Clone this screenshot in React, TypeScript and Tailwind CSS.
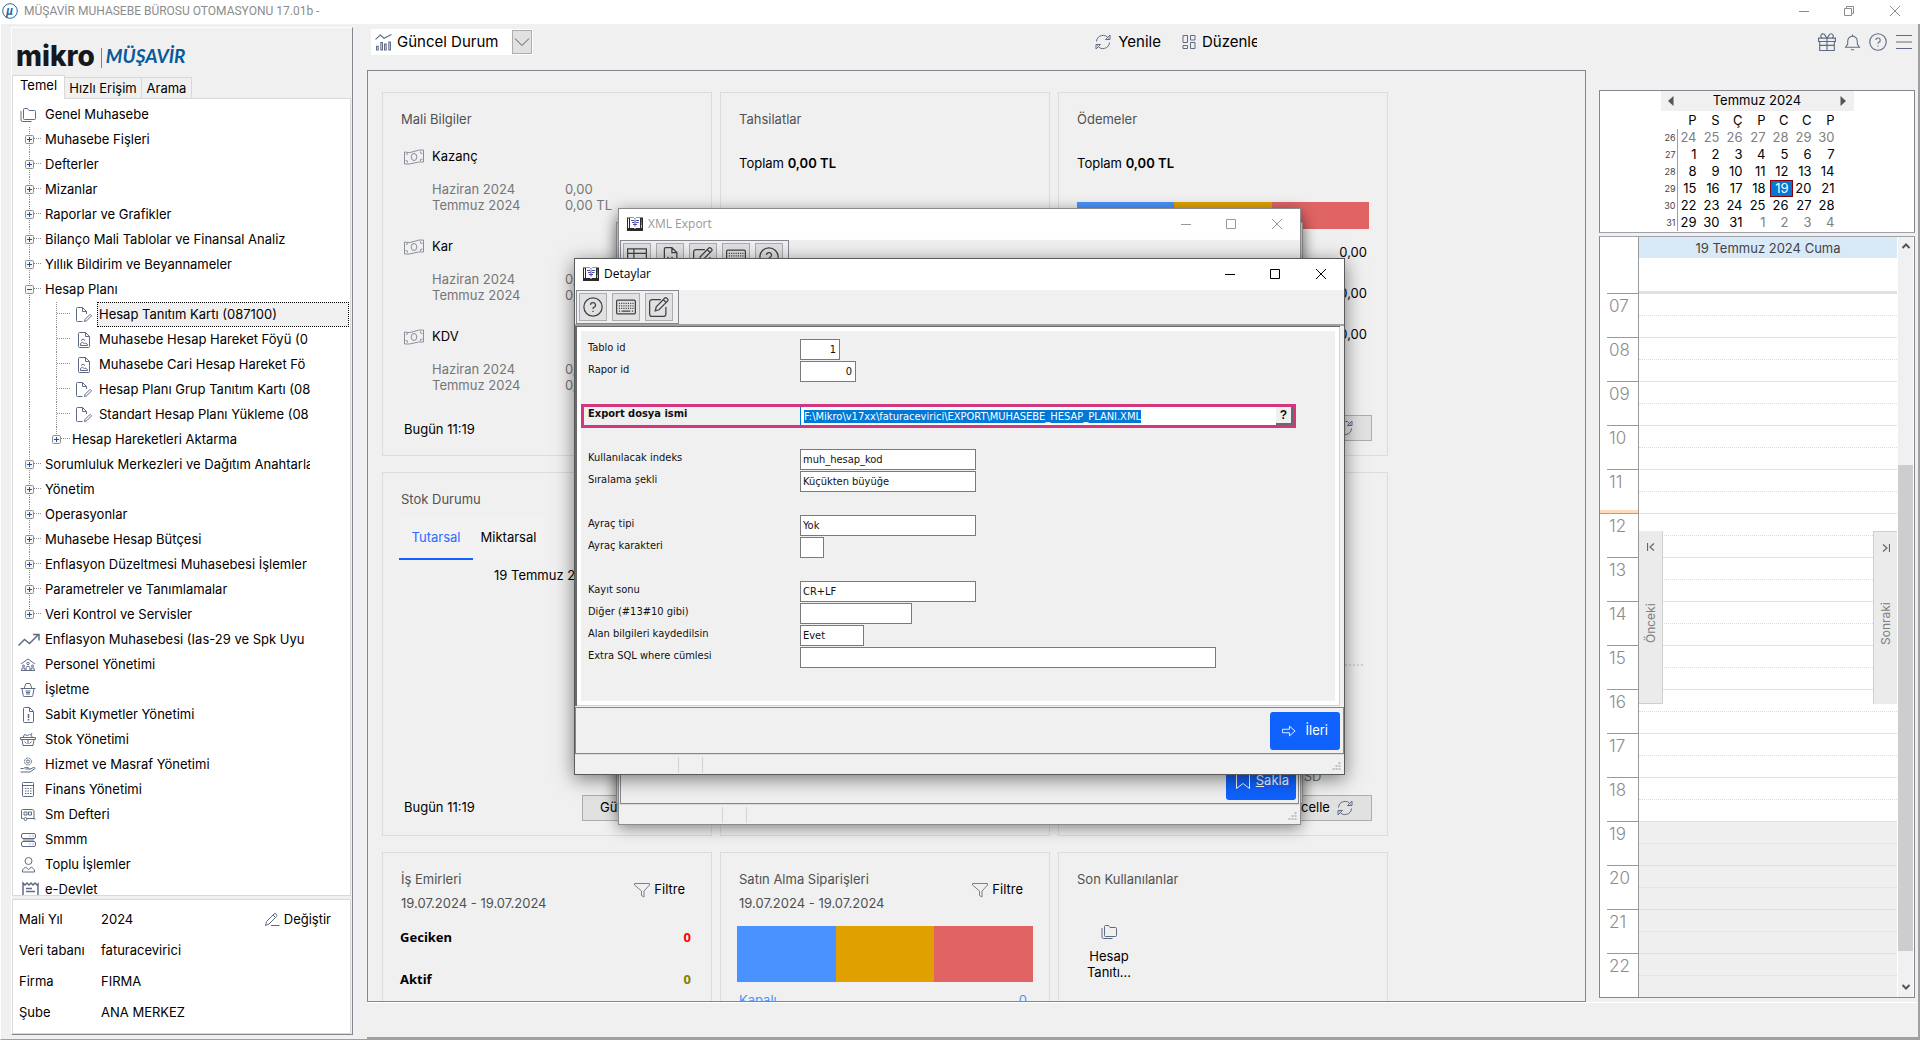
import { useEffect, useRef } from 'react'
import type { ReactNode } from 'react'
import clsx from 'clsx'

type IconProps = { className?: string; children?: ReactNode }

// All line icons share one 16px grid
function Icon({ className = 'size-4', children }: IconProps) {
  return (
    <svg
      viewBox="0 0 16 16"
      className={clsx('shrink-0', className.includes('text-') ? '' : 'text-[#5f6b85]', className)}
      fill="none"
      stroke="currentColor"
      strokeWidth="1"
      aria-hidden="true"
    >
      {children}
    </svg>
  )
}

const ICONS = {
  folders: (
    <>
      <path d="M3.5 11.500v-9a1 1 0 0 1 1-1h3l1.500 2h5.500a1 1 0 0 1 1 1v7a1 1 0 0 1-1 1h-10a1 1 0 0 1-1-1z" />
      <path d="M1 4v9a1.500 1.500 0 0 0 1.500 1.500h9" />
    </>
  ),
  fileEdit: (
    <>
      <path d="M6.500 14.500h-5a1 1 0 0 1-1-1v-12a1 1 0 0 1 1-1h5l4 4v2.500M6.500.5v4h4" />
      <path d="M8.500 14.500l.6-2.200 5-5 1.500 1.500-5 5z" />
    </>
  ),
  fileImage: (
    <>
      <path d="M2.500 1.500a1 1 0 0 1 1-1h6l4 4v10a1 1 0 0 1-1 1h-9a1 1 0 0 1-1-1zM9.500.5v4h4" />
      <path d="M4.500 13.500v-2l2-1.500 2 2 1-1 2 1.500v1z" />
      <path d="M5 8.500l2-1.500 2 1.500" />
    </>
  ),
  people: (
    <>
      <path d="M1 7l7-5 7 5" />
      <circle cx="8" cy="6.500" r="1.200" />
      <circle cx="3.500" cy="9" r="1" />
      <circle cx="12.500" cy="9" r="1" />
      <path d="M6 13.500v-3l2-1.500 2 1.500v3M1.500 13.500l.8-2.500h2.200l.8 2.500M10.700 13.500l.8-2.500h2.200l.8 2.500M1 13.500h14" />
    </>
  ),
  basket: (
    <>
      <path d="M.5 6.500h15M2 6.500l1.200 7a1 1 0 0 0 1 1h7.600a1 1 0 0 0 1-1l1.200-7M4 6.500l2-5M12 6.500l-2-5M6 1.500h4" />
      <path d="M5.500 9h5M6 10.500h4M6 12h4" />
    </>
  ),
  fileAlert: (
    <>
      <path d="M3.500 1.500a1 1 0 0 1 1-1h5l4 4v10a1 1 0 0 1-1 1h-8a1 1 0 0 1-1-1zM9.500.5v4h4" />
      <path d="M8.500 7v4M8.500 12v1.500" strokeWidth="1.500" />
    </>
  ),
  box: (
    <>
      <path d="M.5 5.500h15v2H.5zM2 7.500l1 6h10l1-6M3 5.500l1.500-3 3 1 2-1M12.500 5.500l-2-3M12 1l-1 2" />
      <path d="M4.500 9.500l2 2M8 8v4M11.500 9.500l-2 2" />
    </>
  ),
  handGear: (
    <>
      <circle cx="8" cy="4.500" r="3.500" strokeDasharray="2 .8" />
      <circle cx="8" cy="4.500" r="1.500" />
      <path d="M.5 11.500h3l1.500-.8h3.500l1 1.300h-4M9.500 12.500l4-2a1 1 0 0 1 1.500 1l-5 3.500h-9.500" />
    </>
  ),
  calculator: (
    <>
      <rect x="2.500" y=".5" width="11" height="14" rx="1" />
      <path d="M2.500 3.500h11M5 6.500h1.500M7.500 6.500H9M10 6.500h1.500M5 9h1.500M7.500 9H9M10 9h1.500M5 11.500h1.500M7.500 11.500H9M10 11.500h1.500" />
    </>
  ),
  ledger: (
    <>
      <path d="M1.500 10.500v-7a1 1 0 0 1 1-1h10l1.500 1v8.500h1.500M1.500 9v2.500h2M7 11.500h7" />
      <path d="M4 5h3v3H4zM8.500 5h3v3h-3z" />
      <circle cx="5.500" cy="12" r="1.500" />
    </>
  ),
  server: (
    <>
      <rect x="1.500" y="1.500" width="14" height="5" rx="1.500" />
      <rect x="1.500" y="9.500" width="14" height="5" rx="1.500" />
      <path d="M9.500 4h1M12.500 4h1M9.500 12h1M12.500 12h1M3 8h11" />
    </>
  ),
  user: (
    <>
      <circle cx="8.500" cy="4" r="3.500" />
      <path d="M2.500 15v-2l3-3 3 2.500 3-2.500 3 3v2z" />
    </>
  ),
  pencilLine: (
    <>
      <path d="M1.500 13.500l1-4 7.500-7.500a1.500 1.500 0 0 1 2 0l.5.500a1.500 1.500 0 0 1 0 2L5 12z" />
      <path d="M9 3l2.500 2.500M7 13.500h8.500" />
    </>
  ),
  renew: (
    <>
      <path d="M1.500 7.500a6.500 6.500 0 0 1 12-3M14.500 8.500a6.500 6.500 0 0 1-12 3" />
      <path d="M15 1v4.500h-4.500zM1 15v-4.500h4.500z" />
    </>
  ),
  layout: (
    <path d="M2 1.500h4.500v7H2zM9.500 1.500H14V6H9.500zM2 11.500h4.500v3H2zM9.500 8.500H14v6H9.500z" />
  ),
  filter: <path d="M.5 1.500h15v1.500l-5.500 6v6l-2.500-1.500V9L.5 3z" />,
  gift: (
    <>
      <path d="M.5 4.500h15v3H.5zM1.500 7.500h13v8h-13zM8 4.500v11M1.500 11h13" />
      <path d="M8 4.500L5.500 1a1.800 1.800 0 0 0-2 3.500M8 4.500L10.500 1a1.800 1.800 0 0 1 2 3.500" />
    </>
  ),
  bell: (
    <path d="M1.500 12.500l2-3v-3a4.500 4.500 0 0 1 9 0v3l2 3zM8 2V.5M6.500 14.800h3" />
  ),
  help: (
    <>
      <circle cx="8" cy="8" r="7.300" />
      <path d="M6 6.300a2 2 0 1 1 2.700 2q-.7.3-.7 1.200M8 11v1" />
    </>
  ),
  menu: <path d="M0 1.500h16M0 8h16M0 14.500h16" />,
  chart: (
    <>
      <path d="M.5 5l4.500-4 3.500 3L15.500.5" />
      <path d="M1.500 11.500h1.500v3.500H1.500zM5.500 8h1.500v7H5.500zM9 9.500h1.500v5.500H9zM13 7.500h1.500v7.500H13z" />
    </>
  ),
  keyboard: (
    <>
      <rect x=".5" y="2.500" width="15" height="11" rx="1" />
      <path d="M2.300 5h12M2.300 7h12M2.300 9h12" strokeDasharray=".9 .9" />
      <path d="M2.300 11.300h1M4.500 11.300h7M12.700 11.300h1" />
    </>
  ),
  compose: (
    <>
      <path d="M9.500 2h-7a2 2 0 0 0-2 2v9.500a2 2 0 0 0 2 2h9a2 2 0 0 0 2-2V8" />
      <path d="M5 11l.8-3.200 6.700-6.800a1.300 1.300 0 0 1 1.800 0l.5.500a1.300 1.300 0 0 1 0 1.800L8 10.200zM11.500 2.200l2.200 2.200" />
    </>
  ),
  grid: <path d="M.5 1.500h15v13H.5zM.5 5h15M5.500 1.500v13M.5 9.500h15" />,
  fileX: (
    <>
      <path d="M3.500 14.500v-13a1 1 0 0 1 1-1h5l4 4v10M9.500.5v4h4" />
      <path d="M6 8l4 5M10 8l-4 5" />
    </>
  ),
  arrow: <path d="M.5 6h8V2.500L15 8l-6.500 5.500V10h-8z" />,
  bookmark: <path d="M1.500.5h13v15L8 10.500l-6.500 5z" />,
}

type IconName = keyof typeof ICONS

function Money() {
  return (
    <svg viewBox="0 0 20 16" className="w-5 h-4 text-[#8a8f9c]" fill="none" stroke="currentColor" aria-hidden="true">
      <path d="M.5 3q5 1.500 9.500-.5t9.500-1.500v12q-5-.5-9.500 1t-9.500 1z" />
      <path d="M3.500 4.200v.8l-1.500.5M16.500 2.500v1.500l2 .5M3.500 13.500V12L1.500 11.500M16.500 12V10.500l2-.5" />
      <ellipse cx="10" cy="8" rx="2.800" ry="3.500" />
    </svg>
  )
}

// Open book used as window icon
function BookIcon() {
  return (
    <svg viewBox="0 0 16 14" className="w-4 h-[14px] shrink-0" aria-hidden="true">
      <path d="M0 .5h6.500L8 1.500 9.500.5H16V14H0z" fill="#2a2a2a" />
      <path d="M1 1.500h1V11H1zM3 1h4l1 1 1-1h4v10H9l-1 1-1-1H3z" fill="#fff" />
      <path d="M4 3.500h3M9 3.500h3M5 5.500h2.500M9 5.500h2.500M6 7.500h4M8 2.500v7" stroke="#4a4ab0" fill="none" />
      <path d="M14.500 2v3" stroke="#d22" />
      <path d="M14.500 5v3" stroke="#0a8" />
      <path d="M14.500 8v3" stroke="#ec0" />
    </svg>
  )
}

type TreeItem = {
  label: string
  guide?: 'plus' | 'minus' | 'leaf' | 'subplus'
  icon?: IconName | 'trend' | 'receipt'
  selected?: boolean
  edge?: 'last'
}

const TREE: TreeItem[] = [
  { label: 'Genel Muhasebe', icon: 'folders' },
  { label: 'Muhasebe Fişleri', guide: 'plus' },
  { label: 'Defterler', guide: 'plus' },
  { label: 'Mizanlar', guide: 'plus' },
  { label: 'Raporlar ve Grafikler', guide: 'plus' },
  { label: 'Bilanço Mali Tablolar ve Finansal Analiz', guide: 'plus' },
  { label: 'Yıllık Bildirim ve Beyannameler', guide: 'plus' },
  { label: 'Hesap Planı', guide: 'minus' },
  { label: 'Hesap Tanıtım Kartı (087100)', guide: 'leaf', icon: 'fileEdit', selected: true },
  { label: 'Muhasebe Hesap Hareket Föyü (0', guide: 'leaf', icon: 'fileImage' },
  { label: 'Muhasebe Cari Hesap Hareket Fö', guide: 'leaf', icon: 'fileImage' },
  { label: 'Hesap Planı Grup Tanıtım Kartı (08', guide: 'leaf', icon: 'fileEdit' },
  { label: 'Standart Hesap Planı Yükleme (08', guide: 'leaf', icon: 'fileEdit' },
  { label: 'Hesap Hareketleri Aktarma', guide: 'subplus' },
  { label: 'Sorumluluk Merkezleri ve Dağıtım Anahtarla', guide: 'plus' },
  { label: 'Yönetim', guide: 'plus' },
  { label: 'Operasyonlar', guide: 'plus' },
  { label: 'Muhasebe Hesap Bütçesi', guide: 'plus' },
  { label: 'Enflasyon Düzeltmesi Muhasebesi İşlemler', guide: 'plus' },
  { label: 'Parametreler ve Tanımlamalar', guide: 'plus' },
  { label: 'Veri Kontrol ve Servisler', guide: 'plus', edge: 'last' },
  { label: 'Enflasyon Muhasebesi (Ias-29 ve Spk Uyu', icon: 'trend' },
  { label: 'Personel Yönetimi', icon: 'people' },
  { label: 'İşletme', icon: 'basket' },
  { label: 'Sabit Kıymetler Yönetimi', icon: 'fileAlert' },
  { label: 'Stok Yönetimi', icon: 'box' },
  { label: 'Hizmet ve Masraf Yönetimi', icon: 'handGear' },
  { label: 'Finans Yönetimi', icon: 'calculator' },
  { label: 'Sm Defteri', icon: 'ledger' },
  { label: 'Smmm', icon: 'server' },
  { label: 'Toplu İşlemler', icon: 'user' },
  { label: 'e-Devlet', icon: 'receipt' },
]

function ExpandBox({ x, minus }: { x: number; minus?: boolean }) {
  return (
    <>
      <rect x={x - 3.5} y="8.500" width="8" height="8" rx="1" fill="#f6f6f6" stroke="#8f8f8f" />
      <path d={`M${x - 2} 12.500h5`} stroke="#2a4a9c" />
      {!minus && <path d={`M${x + 0.5} 10v5`} stroke="#2a4a9c" />}
    </>
  )
}

const GUIDE_WIDTH = { plus: 30, minus: 30, leaf: 59, subplus: 57 }

function TreeGuide({ item }: { item: TreeItem }) {
  const deep = item.guide === 'leaf' || item.guide === 'subplus'
  return (
    <svg width={GUIDE_WIDTH[item.guide ?? 'plus']} height="25" className="shrink-0" fill="none" aria-hidden="true">
      <path d={item.edge === 'last' ? 'M16.500 0v12' : 'M16.500 0v25'} stroke="#8c8c8c" strokeDasharray="1 1" />
      {deep && <path d={item.guide === 'subplus' ? 'M43.500 0v12' : 'M43.500 0v25'} stroke="#8c8c8c" strokeDasharray="1 1" />}
      <path d={deep ? 'M44 11.500h13' : 'M17 11.500h12'} stroke="#8c8c8c" strokeDasharray="1 1" />
      {!deep && <ExpandBox x={16} minus={item.guide === 'minus'} />}
      {item.guide === 'subplus' && <ExpandBox x={43} />}
    </svg>
  )
}

function TreeRow({ item }: { item: TreeItem }) {
  return (
    <li className="flex h-[25px] items-center">
      {item.guide && <TreeGuide item={item} />}
      {!item.guide && (
        <span className="flex w-[30px] shrink-0 items-center pl-[7px]">
          {item.icon === 'trend' && (
            <svg viewBox="0 0 22 14" className="-ml-[2px] h-[14px] w-[22px] shrink-0 text-[#5f6b85]" fill="none" stroke="currentColor" strokeWidth="1.500">
              <path d="M.5 12.500l6-6 5 4 9-9M15 1.500h6v6" />
            </svg>
          )}
          {item.icon === 'receipt' && (
            <svg viewBox="0 0 20 18" className="-ml-px h-[18px] w-5 shrink-0 text-[#5f6b85]" fill="none" stroke="currentColor" strokeWidth="1.500">
              <path d="M4 15V2l2 2 2-2 2 2 2-2 2 2 2-2 2 2 1-1v13M0 15.500h15M7 7.500h6M7 10.500h9M1 15v2" />
            </svg>
          )}
          {item.icon && item.icon !== 'trend' && item.icon !== 'receipt' && <Icon>{ICONS[item.icon]}</Icon>}
        </span>
      )}
      {item.guide === 'leaf' && item.icon && (
        <span className="w-[25px] shrink-0 pl-1">
          <Icon>{ICONS[item.icon as IconName]}</Icon>
        </span>
      )}
      <button
        type="button"
        className={clsx(
          'h-[25px] min-w-0 flex-1 overflow-hidden whitespace-nowrap border border-dotted px-px text-left',
          item.selected ? 'mr-px border-black bg-[#f0f0f0]' : 'mr-[39px] border-transparent'
        )}
      >
        {item.label}
      </button>
    </li>
  )
}

const COMPANY_INFO = [
  ['Mali Yıl', '2024'],
  ['Veri tabanı', 'faturacevirici'],
  ['Firma', 'FIRMA'],
  ['Şube', 'ANA MERKEZ'],
]

function Sidebar() {
  return (
    <aside className="flex w-[367px] shrink-0 flex-col border-b border-l border-l-white border-b-[#a0a0a0] pb-1 pl-[10px] pr-[14px] pt-[3px]">
      <div className="flex min-h-0 flex-1 flex-col border border-b-[#828790] border-l-white border-r-[#828790] border-t-white pr-px">
        <div className="flex h-[47px] shrink-0 items-end pb-[7px] pl-1">
          <span className="font-['Inter'] text-[28px] font-extrabold leading-6 text-[#16181d]">mikro</span>
          <span className="ml-[6px] h-5 w-px bg-[#5b8db8]" />
          <span className="ml-1 font-['Lato'] text-[19px] font-bold italic leading-6 text-[#07599c]">MÜŞAVİR</span>
        </div>
        <div className="flex shrink-0 items-end">
          <button type="button" className="z-10 -mb-px h-6 w-[53px] border border-b-0 border-[#d9d9d9] bg-white pb-[3px]">Temel</button>
          <button type="button" className="h-[21px] w-[77px] border border-b-0 border-l-0 border-[#d9d9d9] pt-px">Hızlı Erişim</button>
          <button type="button" className="h-[21px] w-[50px] border border-b-0 border-l-0 border-[#d9d9d9] pt-px">Arama</button>
        </div>
        <ul className="min-h-0 flex-1 overflow-hidden border border-[#d9d9d9] bg-white pt-[3px]">
          {TREE.map((item) => (
            <TreeRow key={item.label} item={item} />
          ))}
        </ul>
        <div className="mt-[3px] flex h-[135px] shrink-0 items-start border border-[#d9d9d9] bg-white pl-[6px] pr-[19px] pt-1">
          <dl className="flex-1">
            {COMPANY_INFO.map(([term, value]) => (
              <div key={term} className="flex h-[31px] items-center">
                <dt className="w-[82px]">{term}</dt>
                <dd>{value}</dd>
              </div>
            ))}
          </dl>
          <button type="button" className="flex h-[31px] items-center gap-1">
            <Icon>{ICONS.pencilLine}</Icon>
            Değiştir
          </button>
        </div>
      </div>
    </aside>
  )
}

function Card({ title, children }: { title?: string; children?: ReactNode }) {
  return (
    <section className="flex h-[364px] flex-col border border-[#dcdcdc] px-[18px] pt-4">
      {title && <h2 className="leading-5 text-[#505050]">{title}</h2>}
      {children}
    </section>
  )
}

function CardFooter() {
  return (
    <div className="mb-[14px] mt-auto flex items-center justify-between pl-[3px] -mr-[3px]">
      <span>Bugün 11:19</span>
      <button type="button" className="flex h-[26px] w-[114px] items-center justify-between border border-[#adadad] bg-[#e1e1e1] pl-[17px] pr-[18px]">
        Güncelle
        <Icon>{ICONS.renew}</Icon>
      </button>
    </div>
  )
}

function StatusBars({ className }: { className: string }) {
  return (
    <div className={clsx('grid grid-cols-3', className)}>
      <div className="bg-[#4a92ff]" />
      <div className="bg-[#e0a100]" />
      <div className="bg-[#e06464]" />
    </div>
  )
}

const FINANCE = ['Kazanç', 'Kar', 'KDV']

function FinanceCard() {
  return (
    <Card title="Mali Bilgiler">
      <div className="pl-[3px] pt-[18px]">
        {FINANCE.map((name) => (
          <div key={name} className="h-[90px]">
            <div className="flex h-5 items-center gap-2">
              <Money />
              <span>{name}</span>
            </div>
            <div className="mt-[14px] grid grid-cols-[133px_1fr] pl-7 leading-4 text-[#767676]">
              <span>Haziran 2024</span>
              <span>0,00</span>
              <span>Temmuz 2024</span>
              <span>0,00 TL</span>
            </div>
          </div>
        ))}
      </div>
      <CardFooter />
    </Card>
  )
}

function StockCard() {
  return (
    <Card title="Stok Durumu">
      <div className="-ml-[2px] mt-[7px] flex h-11 w-[145px] bg-[#f2f2f2]">
        <button type="button" className="w-[74px] border-b-2 border-[#0f62fe] pt-[2px] text-[#2f6bff]">Tutarsal</button>
        <button type="button" className="flex-1">Miktarsal</button>
      </div>
      <p className="mt-[5px] pl-[93px] leading-5">19 Temmuz 2024</p>
      <CardFooter />
    </Card>
  )
}

function FilteredTitle({ title }: { title: string }) {
  return (
    <div className="flex justify-between pr-2">
      <div className="leading-6 text-[#505050]">
        <h2 className="-mt-[2px]">{title}</h2>
        <p>19.07.2024 - 19.07.2024</p>
      </div>
      <button type="button" className="mt-[11px] flex h-5 items-center gap-1 self-start">
        <Icon className="size-4 text-[#7a7f8a]">{ICONS.filter}</Icon>
        Filtre
      </button>
    </div>
  )
}

function Dashboard() {
  return (
    <main className="min-h-0 min-w-0 flex-1 overflow-hidden border border-[#828790] px-[14px] pt-[21px]">
      <div className="grid grid-cols-[330px_330px_330px] gap-x-2 gap-y-4">
        <FinanceCard />
        <Card title="Tahsilatlar">
          <p className="mt-6 leading-5">
            Toplam <b className="font-semibold">0,00 TL</b>
          </p>
          <CardFooter />
        </Card>
        <Card title="Ödemeler">
          <p className="mt-6 leading-5">
            Toplam <b className="font-semibold">0,00 TL</b>
          </p>
          <StatusBars className="mt-[29px] h-[27px]" />
          <ul className="mt-3 pr-[2px] text-right">
            {['Kapalı', 'Açık', 'Geciken'].map((key) => (
              <li key={key} className="h-[41px] leading-[22px]">0,00</li>
            ))}
          </ul>
          <CardFooter />
        </Card>

        <StockCard />
        <Card title="Kasa Durumu">
          <CardFooter />
        </Card>
        <Card title="Döviz Kurları">
          <div className="mt-[155px] border-b-2 border-dotted border-[#d4d4d4] mr-[6px]" />
          <p className="mt-[100px] pl-[217px] leading-5 text-[#767676]">USD</p>
          <CardFooter />
        </Card>

        <Card>
          <FilteredTitle title="İş Emirleri" />
          <dl className="-ml-px mt-3 pr-[2px] font-['Noto_Sans'] font-bold">
            <div className="flex h-[42px] justify-between leading-5">
              <dt>Geciken</dt>
              <dd className="text-[#ff0000]">0</dd>
            </div>
            <div className="flex h-[42px] justify-between leading-5">
              <dt>Aktif</dt>
              <dd className="text-[#808000]">0</dd>
            </div>
          </dl>
        </Card>
        <Card>
          <FilteredTitle title="Satın Alma Siparişleri" />
          <StatusBars className="-mx-[2px] mt-[11px] h-14 shrink-0" />
          <div className="mt-2 flex justify-between pr-1 leading-5 text-[#4a92ff]">
            <span>Kapalı</span>
            <span>0</span>
          </div>
        </Card>
        <Card title="Son Kullanılanlar">
          <button type="button" className="mt-[35px] flex w-16 flex-col items-center gap-2 leading-4">
            <Icon>{ICONS.folders}</Icon>
            Hesap Tanıtı...
          </button>
        </Card>
      </div>
    </main>
  )
}

const WEEKDAYS = ['P', 'S', 'Ç', 'P', 'C', 'C', 'P']
const WEEKS = [
  { no: 26, days: [24, 25, 26, 27, 28, 29, 30] },
  { no: 27, days: [1, 2, 3, 4, 5, 6, 7] },
  { no: 28, days: [8, 9, 10, 11, 12, 13, 14] },
  { no: 29, days: [15, 16, 17, 18, 19, 20, 21] },
  { no: 30, days: [22, 23, 24, 25, 26, 27, 28] },
  { no: 31, days: [29, 30, 31, 1, 2, 3, 4] },
]

function isOtherMonth(no: number, day: number) {
  return (no === 26 && day > 20) || (no === 31 && day < 10)
}

function Calendar() {
  return (
    <div className="flex h-[143px] shrink-0 flex-col items-center border border-[#828790] border-b-[#a0a0a8] bg-white">
      <div className="flex h-5 w-[193px] items-center justify-between bg-[#f0f0f0] px-[7px]">
        <button type="button" aria-label="Önceki ay">
          <svg viewBox="0 0 6 10" className="h-[10px] w-[6px]"><path d="M5.500 0v10L0 5z" fill="#555" /></svg>
        </button>
        <span>Temmuz 2024</span>
        <button type="button" aria-label="Sonraki ay">
          <svg viewBox="0 0 6 10" className="h-[10px] w-[6px]"><path d="M.5 0v10L6 5z" fill="#555" /></svg>
        </button>
      </div>
      <table className="mr-[15px] table-fixed border-separate border-spacing-0 text-right">
        <thead>
          <tr className="h-[18px] leading-[17px]">
            <th className="w-[17px]" />
            {WEEKDAYS.map((d, i) => (
              <th key={i} className="w-[23px] p-0 pr-1 font-normal">{d}</th>
            ))}
          </tr>
        </thead>
        <tbody>
          {WEEKS.map((week) => (
            <tr key={week.no} className="h-[17px]">
              <td className="border-r border-[#a0a0a0] p-0 pr-px text-[9px] leading-[17px] text-[#444]">{week.no}</td>
              {week.days.map((day) => (
                <td
                  key={day}
                  className={clsx(
                    'h-[17px] p-0 leading-[15px]',
                    week.no === 29 && day === 19 ? 'border border-[#8b0000] bg-[#0078d7] pr-[3px] text-white' : 'pr-1',
                    isOtherMonth(week.no, day) && 'text-[#808080]'
                  )}
                >
                  {day}
                </td>
              ))}
            </tr>
          ))}
        </tbody>
      </table>
    </div>
  )
}

const HOURS = ['07', '08', '09', '10', '11', '12', '13', '14', '15', '16', '17', '18', '19', '20', '21', '22']

function DayNav({ side, label }: { side: 'left' | 'right'; label: string }) {
  return (
    <button
      type="button"
      className={clsx(
        'absolute top-[294px] flex h-[173px] w-6 flex-col items-center bg-[#ebebeb] pt-3 text-xs text-[#808080]',
        side === 'left' ? 'left-[39px] border-b border-r border-[#cfcfcf]' : 'right-[17px] border-l border-t border-[#cfcfcf]'
      )}
    >
      <svg viewBox="0 0 8 8" className="h-2 w-2 shrink-0" fill="none" stroke="#666">
        <path d={side === 'left' ? 'M.5 0v8M7 .5L3 4l4 3.500' : 'M7.500 0v8M1 .5L5 4 1 7.500'} strokeWidth="1.200" />
      </svg>
      <span className="flex flex-1 rotate-180 items-center justify-center pt-2 [writing-mode:vertical-rl]">{label}</span>
    </button>
  )
}

function Scheduler() {
  return (
    <div className="relative mt-[3px] flex min-h-0 flex-1 overflow-hidden border border-[#828790] border-t-[#a0a0a8] bg-white">
      <div className="min-w-0 flex-1">
        <div className="flex h-14">
          <div className="w-[39px] border-r border-[#999]" />
          <div className="flex-1 border-b-2 border-[#e0e0e0]">
            <div className="bg-[#d8e9f8] pt-px text-center leading-5 text-[#444]">19 Temmuz 2024 Cuma</div>
          </div>
        </div>
        {HOURS.map((hour) => (
          <div key={hour} className="flex h-11">
            <div className="relative w-[39px] border-r border-[#999] pl-[7px]">
              <div className="border-t border-[#999] pl-[2px] text-[17px] font-light leading-6 text-[#8c8c8c]">{hour}</div>
              {hour === '12' && (
                <div className="absolute inset-x-0 -top-[3px] h-1 border-b border-[#ff8a30] bg-[#ffdcb8]" />
              )}
            </div>
            <div className={clsx('flex-1 border-t border-[#e0e0e0]', Number(hour) >= 19 && 'bg-[#efefef]')}>
              <div className="h-[22px] border-b border-dotted border-[#dcdcdc]" />
            </div>
          </div>
        ))}
      </div>
      {/* scroll bar */}
      <div className="flex w-[17px] shrink-0 flex-col items-center border-x border-white bg-[#f0f0f0]">
        <svg viewBox="0 0 16 16" className="size-4" fill="none" stroke="#555" strokeWidth="2"><path d="M4.500 11L8 7.500l3.500 3.500" /></svg>
        <div className="mt-[212px] w-full flex-1 bg-[#cdcdcd]" />
        <div className="flex h-[46px] items-end pb-px">
          <svg viewBox="0 0 16 16" className="size-4" fill="none" stroke="#555" strokeWidth="2"><path d="M4.500 5L8 8.500 11.500 5" /></svg>
        </div>
      </div>
      <DayNav side="left" label="Önceki" />
      <DayNav side="right" label="Sonraki" />
    </div>
  )
}

function Toolbar() {
  return (
    <header className="flex h-[46px] shrink-0 items-start pl-1 pt-[5px] text-[15px]">
      <div className="flex h-[26px] items-center bg-white pl-[3px] pr-px">
        <Icon className="h-[17px] w-[19px]">{ICONS.chart}</Icon>
        <select aria-label="Görünüm" className="w-[119px] appearance-none bg-white pl-1 outline-none">
          <option>Güncel Durum</option>
        </select>
        <button type="button" aria-label="Aç" className="flex h-6 w-5 items-center justify-center border border-[#adadad] bg-[#e1e1e1]">
          <svg viewBox="0 0 16 16" className="size-4" fill="none" stroke="#555"><path d="M1 4.500l7 7 7-7" /></svg>
        </button>
      </div>
      <div className="ml-auto flex h-[26px] items-center">
        <button type="button" className="flex items-center gap-[7px]">
          <Icon>{ICONS.renew}</Icon>
          Yenile
        </button>
        <button type="button" className="ml-5 flex w-[76px] items-center gap-[5px] overflow-hidden">
          <Icon>{ICONS.layout}</Icon>
          Düzenle
        </button>
      </div>
      <div className="flex h-[26px] w-[661px] items-center justify-end gap-2 pr-[5px]">
        <button type="button" aria-label="Yenilikler"><Icon className="size-[18px]">{ICONS.gift}</Icon></button>
        <button type="button" aria-label="Bildirimler"><Icon className="size-[17px]">{ICONS.bell}</Icon></button>
        <button type="button" aria-label="Yardım"><Icon className="size-[18px]">{ICONS.help}</Icon></button>
        <button type="button" aria-label="Menü"><Icon className="h-4 w-[18px]">{ICONS.menu}</Icon></button>
      </div>
    </header>
  )
}

function WindowControls({ restored }: { restored?: boolean }) {
  return (
    <div className="ml-auto flex h-full items-center">
      <button type="button" aria-label="Simge durumuna küçült" className="flex h-full w-11 items-center justify-center">
        <svg className="size-[10px]" viewBox="0 0 10 10"><path d="M0 5.500h10" stroke="currentColor" /></svg>
      </button>
      <button type="button" aria-label="Ekranı kapla" className="flex h-full w-[46px] items-center justify-center">
        <svg className="size-[10px]" viewBox="0 0 10 10" fill="none" stroke="currentColor">
          {restored ? <path d="M.5 2.500h7v7h-7zM2.500 2.500v-2h7v7h-2" /> : <path d="M.5.5h9v9h-9z" />}
        </svg>
      </button>
      <button type="button" aria-label="Kapat" className="flex h-full w-[46px] items-center justify-center">
        <svg className="size-[10px]" viewBox="0 0 10 10"><path d="M0 0l10 10M10 0L0 10" stroke="currentColor" /></svg>
      </button>
    </div>
  )
}

const TOOL_LABELS: Partial<Record<IconName, string>> = {
  grid: 'Tablo',
  fileX: 'Excel',
  compose: 'Düzenle',
  keyboard: 'Klavye',
  help: 'Yardım',
}

function ToolStrip({ tools }: { tools: IconName[] }) {
  return (
    <div className="flex h-[34px] w-max items-center gap-[5px] border border-[#828790] pl-[2px] pr-[5px]">
      {tools.map((name) => (
        <button
          key={name}
          type="button"
          aria-label={TOOL_LABELS[name]}
          className="flex size-7 items-center justify-center border border-[#adadad] bg-[#e1e1e1]"
        >
          <Icon className="size-5 text-[#3f4247]">{ICONS[name]}</Icon>
        </button>
      ))}
    </div>
  )
}

function StatusBar() {
  return (
    <div className="flex h-5 items-stretch border-t border-[#dcdcdc] pb-px pt-[2px]">
      <div className="w-[104px] border-r border-[#d4d4d4]" />
      <div className="w-6 border-r border-[#d4d4d4]" />
      <svg viewBox="0 0 10 10" className="mb-px ml-auto mr-[2px] size-[10px] self-end" fill="#bfbfbf">
        <path d="M6.500 0h2v2h-2zM3.500 3h2v2h-2zM6.500 3h2v2h-2zM.5 6h2v2h-2zM3.500 6h2v2h-2zM6.500 6h2v2h-2z" />
      </svg>
    </div>
  )
}

function ExportWindow() {
  return (
    <>
      {/* host frame that the export window sits on */}
      <div className="absolute left-[616px] top-[222px] h-[582px] w-[687px] border border-[#a0a0a0] bg-[#e4e4e4] shadow-[0_3px_14px_rgba(0,0,0,0.35)]" />
      <div className="absolute left-[618px] top-[208px] flex h-[617px] w-[683px] flex-col border border-[#8c8c8c] bg-[#f0f0f0] shadow-[0_3px_14px_rgba(0,0,0,0.45)]">
        <div className="flex h-[31px] items-center gap-[5px] bg-white pb-[2px] pl-2 font-['Open_Sans'] text-xs text-[#999]">
          <BookIcon />
          XML Export
          <WindowControls />
        </div>
        <div className="pl-px">
          <ToolStrip tools={['grid', 'fileX', 'compose', 'keyboard', 'help']} />
        </div>
        <div className="mx-px mt-auto flex h-[46px] items-center justify-end border border-[#828790] pr-[2px]">
          <button type="button" className="flex h-[38px] w-[70px] items-center justify-between rounded-[3px] bg-[#0f62fe] px-[7px] pl-[9px] text-white">
            <Icon className="size-4 text-white">{ICONS.bookmark}</Icon>
            <span><u>S</u>akla</span>
          </button>
        </div>
        <StatusBar />
      </div>
    </>
  )
}

type Field = { id: string; label: string; value: string; width: string; numeric?: boolean; gap?: boolean }

const TOP_FIELDS: Field[] = [
  { id: 'tablo', label: 'Tablo id', value: '1', width: 'w-10', numeric: true },
  { id: 'rapor', label: 'Rapor id', value: '0', width: 'w-14', numeric: true },
]

// gap = one empty line above the field
const BOTTOM_FIELDS: Field[] = [
  { id: 'indeks', label: 'Kullanılacak indeks', value: 'muh_hesap_kod', width: 'w-44' },
  { id: 'siralama', label: 'Sıralama şekli', value: 'Küçükten büyüğe', width: 'w-44' },
  { id: 'ayrac', label: 'Ayraç tipi', value: 'Yok', width: 'w-44', gap: true },
  { id: 'karakter', label: 'Ayraç karakteri', value: '', width: 'w-6' },
  { id: 'kayit', label: 'Kayıt sonu', value: 'CR+LF', width: 'w-44', gap: true },
  { id: 'diger', label: 'Diğer (#13#10 gibi)', value: '', width: 'w-28' },
  { id: 'alan', label: 'Alan bilgileri kaydedilsin', value: 'Evet', width: 'w-16' },
  { id: 'sql', label: 'Extra SQL where cümlesi', value: '', width: 'w-[416px]' },
]

function FieldRow({ field }: { field: Field }) {
  return (
    <div className={clsx('flex h-[22px] pl-[7px]', field.gap && 'mt-[22px]')}>
      <label htmlFor={field.id} className="w-[212px] leading-[18px]">{field.label}</label>
      <input
        id={field.id}
        defaultValue={field.value}
        className={clsx(
          'h-[21px] border border-[#7a7a7a] bg-white pl-[2px] pr-[3px] outline-none',
          field.width,
          field.numeric && 'text-right'
        )}
      />
    </div>
  )
}

function DetailsWindow() {
  const fileRef = useRef<HTMLInputElement>(null)

  useEffect(() => {
    fileRef.current?.focus()
    fileRef.current?.setSelectionRange(0, fileRef.current.value.length, 'backward')
  }, [])

  return (
    <div className="absolute left-[574px] top-[258px] flex h-[517px] w-[771px] flex-col border border-[#5a5a5a] bg-[#f0f0f0] shadow-[0_4px_18px_rgba(0,0,0,0.5)]">
      <div className="flex h-[31px] shrink-0 items-center gap-[5px] bg-white pb-[2px] pl-2 font-['Open_Sans'] text-xs">
        <BookIcon />
        Detaylar
        <WindowControls />
      </div>
      <div className="pl-px">
        <ToolStrip tools={['help', 'keyboard', 'compose']} />
      </div>
      <div className="h-[2px] bg-[#a0a0a0]" />
      <form className="mb-px mr-1 flex-1 border-l-2 border-t border-[#696969] font-['DejaVu_Sans_Condensed'] text-[11px] text-[#111]">
        <div className="h-full border-b border-r border-[#d4d4d4]">
          <div className="h-full border-4 border-white pt-2">
            {TOP_FIELDS.map((f) => (
              <FieldRow key={f.id} field={f} />
            ))}
            <div className="mt-[21px] flex h-6 w-[715px] items-center border-[3px] border-[#d1367f]">
              <label htmlFor="dosya" className="w-[216px] pb-1 pl-1 font-bold">Export dosya ismi</label>
              <input
                id="dosya"
                ref={fileRef}
                defaultValue="F:\Mikro\v17xx\faturacevirici\EXPORT\MUHASEBE_HESAP_PLANI.XML"
                className="h-[18px] min-w-0 flex-1 border-l border-[#0078d7] bg-white pl-[3px] outline-none selection:bg-[#0078d7] selection:text-white"
              />
              <button
                type="button"
                className="flex h-[18px] w-[17px] items-center justify-center border-b-2 border-r-2 border-[#696969] bg-[#f0f0f0] font-['Liberation_Sans'] text-xs font-bold"
              >
                ?
              </button>
            </div>
            <div className="mt-[21px]">
              {BOTTOM_FIELDS.map((f) => (
                <FieldRow key={f.id} field={f} />
              ))}
            </div>
          </div>
        </div>
      </form>
      <div className="flex h-[47px] shrink-0 items-center justify-end border border-[#828790] pr-[3px]">
        <button type="button" className="flex h-[38px] w-[70px] items-center justify-between rounded-[3px] bg-[#0f62fe] px-3 text-white">
          <Icon className="size-[14px] text-white">{ICONS.arrow}</Icon>
          İleri
        </button>
      </div>
      <StatusBar />
    </div>
  )
}

export default function App() {
  return (
    <div className="relative flex h-screen flex-col overflow-hidden bg-[#f0f0f0] font-['Inter',sans-serif] text-[13px] text-black">
      <div className="flex h-6 shrink-0 items-center gap-[6px] bg-white pb-[2px] pl-[2px] pr-[2px] font-['Roboto'] text-xs text-[#8c8c8c]">
        <svg viewBox="0 0 16 16" className="size-4" fill="none" aria-hidden="true">
          <circle cx="8" cy="8" r="7.300" stroke="#1f6aa5" />
          <text x="4" y="11.500" fontSize="12" fontWeight="700" fontStyle="italic" fontFamily="Liberation Sans" fill="#1f6aa5">µ</text>
        </svg>
        MÜŞAVİR MUHASEBE BÜROSU OTOMASYONU 17.01b -
        <WindowControls restored />
      </div>
      <div className="flex min-h-0 flex-1">
        <Sidebar />
        <div className="flex min-w-0 flex-1 flex-col border-b-[3px] border-r-2 border-[#a0a0a0]">
          <Toolbar />
          <div className="flex min-h-0 flex-1 border-b border-white">
            <Dashboard />
            <aside className="flex w-[332px] shrink-0 flex-col pb-1 pl-[13px] pr-[3px] pt-5">
              <Calendar />
              <Scheduler />
            </aside>
          </div>
          <div className="h-[34px] shrink-0" />
        </div>
      </div>
      <ExportWindow />
      <DetailsWindow />
    </div>
  )
}
